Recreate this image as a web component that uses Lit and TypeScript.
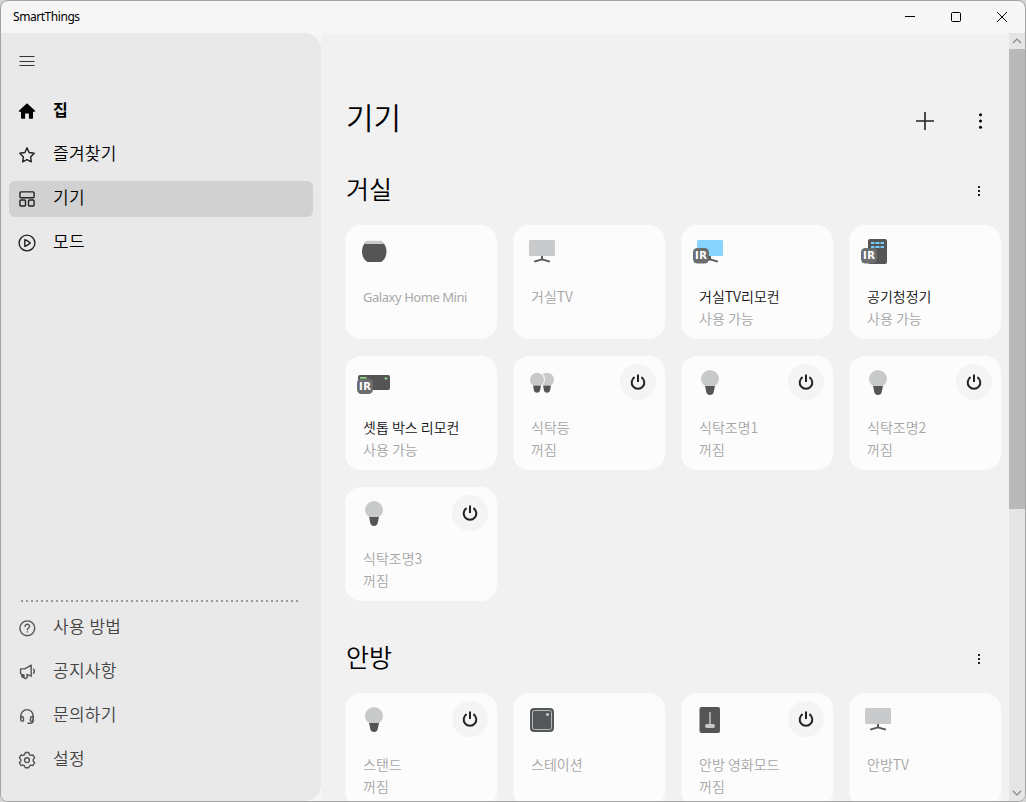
import { LitElement, html, css, svg, nothing } from 'lit';
import { customElement, property } from 'lit/decorators.js';
import { classMap } from 'lit/directives/class-map.js';

interface Device {
  name: string;
  icon: string;
  status?: string;
  active?: boolean;
  power?: boolean;
}

interface Room {
  name: string;
  devices: Device[];
}

const MAIN_MENU = [
  { icon: 'home', label: '집' },
  { icon: 'star', label: '즐겨찾기' },
  { icon: 'devices', label: '기기' },
  { icon: 'mode', label: '모드' },
];

const HELP_MENU = [
  { icon: 'help', label: '사용 방법' },
  { icon: 'notice', label: '공지사항' },
  { icon: 'contact', label: '문의하기' },
  { icon: 'settings', label: '설정' },
];

const ROOMS: Room[] = [
  {
    name: '거실',
    devices: [
      { name: 'Galaxy Home Mini', icon: 'speaker' },
      { name: '거실TV', icon: 'tv' },
      { name: '거실TV리모컨', icon: 'tvRemote', status: '사용 가능', active: true },
      { name: '공기청정기', icon: 'purifier', status: '사용 가능', active: true },
      { name: '셋톱 박스 리모컨', icon: 'settop', status: '사용 가능', active: true },
      { name: '식탁등', icon: 'bulbs', status: '꺼짐', power: true },
      { name: '식탁조명1', icon: 'bulb', status: '꺼짐', power: true },
      { name: '식탁조명2', icon: 'bulb', status: '꺼짐', power: true },
      { name: '식탁조명3', icon: 'bulb', status: '꺼짐', power: true },
    ],
  },
  {
    name: '안방',
    devices: [
      { name: '스탠드', icon: 'bulb', status: '꺼짐', power: true },
      { name: '스테이션', icon: 'station' },
      { name: '안방 영화모드', icon: 'switch', status: '꺼짐', power: true },
      { name: '안방TV', icon: 'tv' },
    ],
  },
];

const MENU_ICONS = {
  home: svg`
    <path d="M9 1.200 .9 8.800c-.3.4-.1.9.4.9H3v6.400c0 .4.300.7.700.7h3.400v-5.300h3.800v5.300h3.400c.4 0 .7-.3.7-.7V9.700h1.700c.5 0 .7-.5.4-.9z" fill="currentColor"/>`,
  star: svg`
    <path d="M9 1.900 11.100 6.500 16.200 7.200 12.600 10.900 13.300 15.900 9 13.600 4.700 15.900 5.400 10.900 1.800 7.200 6.900 6.500z"/>`,
  devices: svg`
    <rect x="1.900" y="1.900" width="14.200" height="5.800" rx="1"/>
    <rect x="1.900" y="10" width="5.600" height="6" rx="1"/>
    <rect x="10.500" y="10" width="5.600" height="6" rx="1"/>`,
  mode: svg`
    <circle cx="9" cy="9" r="7.900"/>
    <path d="M6.800 6.100v5.800c0 .4.300.5.600.4l4.600-2.900c.3-.2.3-.6 0-.8L7.400 5.700c-.3-.2-.6 0-.6.4z"/>`,
  help: svg`
    <circle cx="9.300" cy="9.300" r="7.400"/>
    <path d="M7.100 7.400c0-3 4.500-2.800 4.400 0 0 1.600-2.200 1.700-2.200 3.400"/>
    <circle cx="9.300" cy="12.900" r=".7" fill="currentColor" stroke="none"/>`,
  notice: svg`
    <path d="M2.600 5.900h4.200l6.400-3.700v11L9 11.400v.4l.3 2.700-1.900 1.200-1.400-.9V12l-1.100-.2v2.400l-1-.4-.3-2.600-1.100-.8z"/>
    <path d="M15.500 6.200c1.200 1 1.200 3 0 4"/>`,
  contact: svg`
    <path d="M2.800 11V8.800a6.200 6.200 0 0 1 12.400 0v4.700c0 1.700-1.200 2.700-3 2.700H10"/>
    <path d="M2.800 9.500c1.900-.2 2.700.4 2.700 1.800v2.500c-1.200.7-2.700.3-2.700-1zM15.200 9.500c-1.900-.2-2.700.4-2.700 1.800v2.500c1.200.7 2.700.3 2.700-1z"/>`,
  settings: svg`
    <path d="M7.300 1.500h3.400l.8 2.200 1.200.7 2.300-.4 1.600 2.900-1.500 1.700v1.400l1.500 1.700-1.600 2.800-2.300-.4-1.200.8-.8 1.900H7.300l-.8-1.900-1.200-.8-2.300.4-1.600-2.800 1.500-1.700V8.600L1.400 6.900 3 4l2.300.4 1.200-.7z"/>
    <circle cx="9" cy="9.200" r="2.400"/>`,
};

const irBadge = (y: number) => svg`
  <g transform="translate(2 ${y})">
    <rect width="16" height="15.500" rx="4.500" fill="#6b6d6e"/>
    <text x="8.300" y="11.300" text-anchor="middle" fill="#fff" class="ir">IR</text>
  </g>`;

const bulb = svg`
  <path d="M14 19.800h10l-1.300 6.300c-.4 1.800-1.600 2.900-3.700 2.900s-3.300-1.100-3.700-2.900z" fill="#555"/>
  <path d="M19 4a9 9 0 0 0-9 9c0 3 1.600 5.300 3.900 7h10.200c2.300-1.700 3.900-4 3.900-7a9 9 0 0 0-9-9z" fill="#c8cac9"/>`;

const smallBulb = svg`
  <path d="M3 12.500h8l-.9 5c-.3 1.600-1.300 2.500-3.100 2.500s-2.800-.9-3.100-2.500z" fill="#555"/>
  <path d="M7 0a7 7 0 0 0-7 7c0 2.400 1.200 4.300 3 5.700h8c1.800-1.400 3-3.300 3-5.700a7 7 0 0 0-7-7z" fill="#c8cac9"/>`;

const tv = (screen: string) => svg`
  <path d="M19 21v3M19 24.300l-7.800 2.300M19 24.300l7.800 2.300" fill="none" stroke="#555" stroke-width="1.900"/>
  <rect x="6" y="5" width="26" height="16" rx="1.500" fill=${screen}/>`;

const DEVICE_ICONS = {
  speaker: svg`
    <path d="M12 6h14c3.700 2.500 5.500 6 5.500 10.400S29.700 25 26 27H12.500C8.800 25 7 20.800 7 16.400S8.800 8.500 12 6z" fill="#555"/>
    <path d="M12 5.800h14q1.800 1 3 3.200H9.400q1.200-2.200 2.600-3.200z" fill="#c8cac9"/>`,
  tv: tv('#c8cacb'),
  tvRemote: svg`${tv('#87d4ff')}${irBadge(13)}`,
  purifier: svg`
    <rect x="9" y="4" width="19" height="25" rx="2" fill="#555"/>
    <path d="M12 8h3.500M16.500 8h4M21.500 8h3.500M12 12h3.500M16.500 12h4M21.500 12h3.500" stroke="#75cbfb" stroke-width="2.200"/>
    ${irBadge(13)}`,
  settop: svg`
    <rect x="3" y="9" width="32" height="15" rx="2" fill="#555"/>
    <path d="M5 12h6.500" stroke="#8ae085" stroke-width="2"/>
    <path d="M29.500 12.500h3M31 11v3" stroke="#8ae085"/>
    ${irBadge(12.5)}`,
  bulbs: svg`
    <g transform="translate(17 6.700)">${smallBulb}</g>
    <circle cx="14" cy="13.700" r="7.900" fill="#fcfcfc"/>
    <g transform="translate(7 6.700)">${smallBulb}</g>`,
  bulb,
  station: svg`
    <rect x="7" y="5" width="24" height="24" rx="4" fill="#54585a"/>
    <rect x="9.500" y="7.500" width="19" height="19" rx="2" fill="none" stroke="#b6babb"/>
    <circle cx="24.500" cy="11.500" r="1.600" fill="#c5c8c9"/>`,
  switch: svg`
    <rect x="8.500" y="4" width="20.500" height="26" rx="2" fill="#555"/>
    <path d="M19 9v13" stroke="#a5a7a8" stroke-width="2"/>
    <rect x="14" y="21" width="10" height="4" rx="2" fill="#c8cac9"/>`,
};

@customElement('menu-item')
export class MenuItem extends LitElement {
  static styles = css`
    .item {
      display: flex;
      align-items: center;
      gap: 17px;
      height: 36px;
      padding-left: 9px;
      border-radius: 6px;
      font-size: 17px;
      font-weight: 350;
      letter-spacing: 0.25px;
      color: #000;
    }
    .item--selected {
      background: #d1d1d1;
    }
    .item--muted {
      color: #444;
    }
    .item--bold {
      color: #000;
      font-size: 16px;
      font-weight: 700;
    }
    .icon {
      flex: none;
      width: 18px;
      height: 18px;
      fill: none;
      stroke: #222;
      stroke-width: 1.4;
      stroke-linejoin: round;
      stroke-linecap: round;
    }
    .item--muted .icon {
      stroke: #555;
    }
    .item--bold .icon {
      stroke: none;
    }
    .label {
      line-height: 24px;
      padding-bottom: 2px;
    }
  `;

  @property() icon = '';
  @property() label = '';
  @property({ type: Boolean }) selected = false;
  @property({ type: Boolean }) muted = false;

  render() {
    const classes = {
      item: true,
      'item--selected': this.selected,
      'item--muted': this.muted,
      'item--bold': this.icon === 'home',
    };
    return html`
      <div class=${classMap(classes)}>
        <svg class="icon" viewBox="0 0 18 18">${MENU_ICONS[this.icon]}</svg>
        <span class="label">${this.label}</span>
      </div>
    `;
  }
}

@customElement('device-card')
export class DeviceCard extends LitElement {
  static styles = css`
    .card {
      box-sizing: border-box;
      height: 114.5px;
      border-radius: 16px;
      background: #fcfcfc;
      color: #a6a6a6;
      font-family: 'Noto Sans CJK KR', sans-serif;
      font-size: 14px;
      font-weight: 350;
      line-height: 22px;
    }
    .top {
      display: flex;
      align-items: flex-start;
      justify-content: space-between;
      height: 50px;
      padding: 8px 9px 2px 10px;
    }
    .icon {
      width: 40px;
      height: 36px;
      margin-top: 2px;
    }
    .ir {
      font-family: 'DejaVu Sans', sans-serif;
      font-size: 10px;
      font-weight: 700;
      letter-spacing: 0.5px;
    }
    .power {
      display: flex;
      align-items: center;
      justify-content: center;
      width: 36px;
      height: 36px;
      border-radius: 50%;
      background: #f4f4f4;
    }
    .power svg {
      width: 18px;
      height: 18px;
      fill: none;
      stroke: #222;
      stroke-width: 2;
    }
    .text {
      padding-left: 18px;
      white-space: nowrap;
    }
    .name--active {
      color: #111;
    }
    .name--latin {
      padding-top: 1px;
      color: #a9a9a9;
      font-family: 'Noto Sans', sans-serif;
      font-size: 13px;
      font-weight: 400;
      letter-spacing: -0.45px;
    }
  `;

  @property({ attribute: false }) device!: Device;

  render() {
    const { name, icon, status, active, power } = this.device;
    const nameClasses = {
      'name--active': !!active,
      'name--latin': /^[A-Za-z ]+$/.test(name),
    };
    return html`
      <div class="card">
        <div class="top">
          <svg class="icon" viewBox="0 0 40 36">${DEVICE_ICONS[icon]}</svg>
          ${power
            ? html`
                <div class="power">
                  <svg viewBox="0 0 18 18">
                    <path d="M5.600 4.200a6.300 6.300 0 1 0 6.800 0M9 1.500v7.500" />
                  </svg>
                </div>
              `
            : nothing}
        </div>
        <div class="text">
          <div class=${classMap(nameClasses)}>${name}</div>
          ${status ? html`<div>${status}</div>` : nothing}
        </div>
      </div>
    `;
  }
}

@customElement('app-root')
export class AppRoot extends LitElement {
  static styles = css`
    :host {
      display: block;
      height: 802px;
      background: #d4d4d4;
      font-family: 'Noto Sans', 'Noto Sans CJK KR', sans-serif;
      color: #000;
    }
    .window {
      box-sizing: border-box;
      display: grid;
      grid-template-rows: 32px 1fr;
      width: 1026px;
      height: 802px;
      border: 1px solid #a3a3a3;
      border-radius: 8px;
      background: #f6f6f6;
      overflow: hidden;
    }
    .titlebar {
      display: flex;
      align-items: center;
      justify-content: space-between;
      padding-left: 12px;
      font-size: 12px;
      letter-spacing: -0.45px;
    }
    .app-name {
      padding-bottom: 1px;
    }
    .controls {
      display: flex;
    }
    .controls svg {
      width: 46px;
      height: 32px;
      fill: none;
      stroke: #000;
    }
    .body {
      display: grid;
      grid-template-columns: 320px 1fr 16px;
      min-height: 0;
    }
    .sidebar {
      box-sizing: border-box;
      display: flex;
      flex-direction: column;
      padding: 17px 8px 23px;
      border-radius: 0 16px 16px 0;
      background: #e9e9e9;
    }
    .hamburger {
      width: 18px;
      height: 22px;
      margin: 0 0 21px 9px;
      stroke: #333;
    }
    .menu {
      display: flex;
      flex-direction: column;
      gap: 8px;
    }
    .separator {
      height: 2px;
      margin: auto 15px 8px 12px;
      background: repeating-linear-gradient(90deg, #999 0 2px, transparent 2px 5px);
    }
    .content {
      padding: 0 8px 0 24px;
      background: #f1f1f1;
      overflow: hidden;
    }
    .header {
      display: flex;
      align-items: center;
      justify-content: space-between;
      height: 48px;
      padding: 61px 10px 0 0;
    }
    .title {
      padding-left: 1px;
      font-size: 30px;
      font-weight: 350;
      line-height: 40px;
    }
    .actions {
      display: flex;
      gap: 36px;
      margin-top: 5px;
    }
    .actions svg {
      width: 20px;
      height: 20px;
    }
    .room-header {
      display: flex;
      align-items: center;
      justify-content: space-between;
      height: 50px;
      padding: 24px 17px 9px 0;
    }
    .room + .room .room-header {
      padding-top: 32px;
    }
    .room-name {
      padding: 0 0 4px 1px;
      font-size: 25px;
      font-weight: 350;
      line-height: 40px;
    }
    .room-more {
      width: 10px;
      height: 12px;
    }
    .cards {
      display: grid;
      grid-template-columns: repeat(4, 152px);
      grid-auto-rows: 115px;
      gap: 16px;
    }
    device-card {
      margin-top: -0.5px;
    }
    .scrollbar {
      display: flex;
      flex-direction: column;
      background: #e5e5e5;
    }
    .scrollbar svg {
      width: 16px;
      height: 16px;
      fill: none;
      stroke: #858585;
      stroke-width: 1.2;
    }
    .thumb {
      height: 460px;
      margin-bottom: auto;
      background: #b9b9b9;
    }
  `;

  private _renderTitlebar() {
    return html`
      <div class="titlebar">
        <span class="app-name">SmartThings</span>
        <div class="controls">
          <svg viewBox="0 0 46 32"><path d="M18 15.500h10" /></svg>
          <svg viewBox="0 0 46 32"><rect x="18.500" y="11.500" width="9" height="9" rx="1" /></svg>
          <svg viewBox="0 0 46 32"><path d="M18 11l10 10M28 11l-10 10" /></svg>
        </div>
      </div>
    `;
  }

  private _renderSidebar() {
    return html`
      <div class="sidebar">
        <svg class="hamburger" viewBox="0 0 18 22">
          <path d="M1.500 6.500h15M1.500 11.500h15M1.500 15.500h15" />
        </svg>
        <div class="menu">
          ${MAIN_MENU.map(
            (m) => html`
              <menu-item .icon=${m.icon} .label=${m.label} .selected=${m.icon === 'devices'}></menu-item>
            `
          )}
        </div>
        <div class="separator"></div>
        <div class="menu">
          ${HELP_MENU.map((m) => html`<menu-item .icon=${m.icon} .label=${m.label} muted></menu-item>`)}
        </div>
      </div>
    `;
  }

  private _renderRoom(room: Room) {
    return html`
      <div class="room">
        <div class="room-header">
          <span class="room-name">${room.name}</span>
          <svg class="room-more" viewBox="0 0 10 12">
            <path d="M4 1h2v2h-2zM4 5h2v2h-2zM4 9h2v2h-2z" fill="#222" />
          </svg>
        </div>
        <div class="cards">
          ${room.devices.map((d) => html`<device-card .device=${d}></device-card>`)}
        </div>
      </div>
    `;
  }

  render() {
    return html`
      <div class="window">
        ${this._renderTitlebar()}
        <div class="body">
          ${this._renderSidebar()}
          <div class="content">
            <div class="header">
              <span class="title">기기</span>
              <div class="actions">
                <svg viewBox="0 0 20 20">
                  <path d="M10 1v18M1 10h18" stroke="#222" stroke-width="1.600" />
                </svg>
                <svg viewBox="0 0 20 20">
                  <circle cx="9.500" cy="3.700" r="1.500" />
                  <circle cx="9.500" cy="10" r="1.500" />
                  <circle cx="9.500" cy="16.300" r="1.500" />
                </svg>
              </div>
            </div>
            ${ROOMS.map((room) => this._renderRoom(room))}
          </div>
          <div class="scrollbar">
            <svg viewBox="0 0 16 16"><path d="M4 10l4-4 4 4" /></svg>
            <div class="thumb"></div>
            <svg viewBox="0 0 16 16"><path d="M4 6l4 4 4-4" /></svg>
          </div>
        </div>
      </div>
    `;
  }
}
